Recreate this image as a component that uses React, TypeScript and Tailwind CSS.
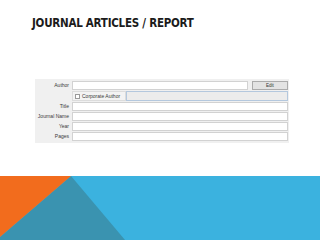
const labelCls =
  "w-[35px] shrink-0 text-right pr-[1px] text-[5px] leading-[9px] text-[#3a3a3a]";

function FieldRow({ label }: { label: string }) {
  return (
    <div className="flex h-[9px] items-stretch gap-[2px]">
      <div className={labelCls}>{label}</div>
      <div className="flex-1 border border-[#d2d2d2] bg-white" />
    </div>
  );
}

export default function App() {
  return (
    <div
      className="flex h-[240px] w-[320px] flex-col overflow-hidden bg-white"
      style={{ fontFamily: '"Liberation Sans", Arial, sans-serif' }}
    >
      <h1
        className="pl-[32px] pt-[16px] text-[11.5px] font-bold leading-[14px] tracking-[-0.25px] text-[#1b1b1b]"
        style={{ fontFamily: '"DejaVu Sans Condensed", "Liberation Sans", sans-serif' }}
      >
        JOURNAL ARTICLES / REPORT
      </h1>

      <div className="ml-[35px] mt-[49px] flex w-[254px] flex-col gap-[1px] bg-[#f0f0f0] pb-[2px] pt-[2px] pr-[1px]">
        <div className="flex h-[9px] items-stretch gap-[2px]">
          <div className={labelCls}>Author</div>
          <div className="flex-1 border border-[#d2d2d2] bg-white" />
          <button className="ml-[2px] w-[36px] border border-[#ababab] bg-[#e3e3e3] text-[4.5px] leading-[7px] text-[#333]">
            Edit
          </button>
        </div>

        <div className="flex h-[10px] items-stretch">
          <div className="w-[37px] shrink-0" />
          <div className="flex w-[54px] items-center gap-[2px] border border-[#dcdcdc] bg-[#f3f3f3] pl-[2px]">
            <span className="h-[5px] w-[5px] border border-[#9a9a9a] bg-white" />
            <span className="text-[5px] leading-[8px] text-[#3a3a3a]">Corporate Author</span>
          </div>
          <div className="flex-1 border border-[#b4c8de] bg-[#ececec]" />
        </div>

        <FieldRow label="Title" />
        <FieldRow label="Journal Name" />
        <FieldRow label="Year" />
        <FieldRow label="Pages" />
      </div>

      <div className="relative mt-[33px] h-[64px] w-[320px] bg-[#3bb2df]">
        <svg
          className="absolute left-0 top-0"
          width="320"
          height="64"
          viewBox="0 0 320 64"
        >
          <polygon points="71,0 125,64 0,64 0,61" fill="#3a93b0" />
          <polygon points="0,0 71,0 0,61" fill="#f26c1d" />
        </svg>
      </div>
    </div>
  );
}
